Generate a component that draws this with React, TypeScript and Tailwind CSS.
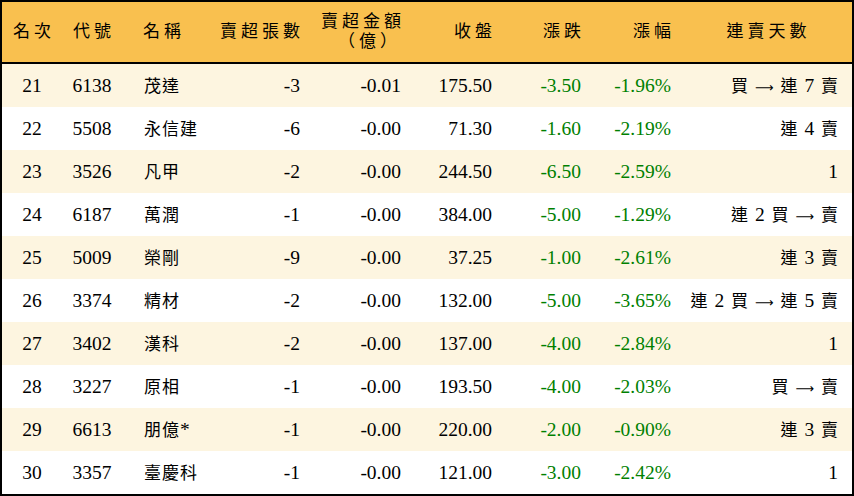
import React from "react";

type Row = {
  rank: string;
  code: string;
  name: string;
  lots: string;
  amount: string;
  close: string;
  change: string;
  pct: string;
  streak: string;
};

const rows: Row[] = [
  { rank: "21", code: "6138", name: "茂達", lots: "-3", amount: "-0.01", close: "175.50", change: "-3.50", pct: "-1.96%", streak: "買 → 連 7 賣" },
  { rank: "22", code: "5508", name: "永信建", lots: "-6", amount: "-0.00", close: "71.30", change: "-1.60", pct: "-2.19%", streak: "連 4 賣" },
  { rank: "23", code: "3526", name: "凡甲", lots: "-2", amount: "-0.00", close: "244.50", change: "-6.50", pct: "-2.59%", streak: "1" },
  { rank: "24", code: "6187", name: "萬潤", lots: "-1", amount: "-0.00", close: "384.00", change: "-5.00", pct: "-1.29%", streak: "連 2 買 → 賣" },
  { rank: "25", code: "5009", name: "榮剛", lots: "-9", amount: "-0.00", close: "37.25", change: "-1.00", pct: "-2.61%", streak: "連 3 賣" },
  { rank: "26", code: "3374", name: "精材", lots: "-2", amount: "-0.00", close: "132.00", change: "-5.00", pct: "-3.65%", streak: "連 2 買 → 連 5 賣" },
  { rank: "27", code: "3402", name: "漢科", lots: "-2", amount: "-0.00", close: "137.00", change: "-4.00", pct: "-2.84%", streak: "1" },
  { rank: "28", code: "3227", name: "原相", lots: "-1", amount: "-0.00", close: "193.50", change: "-4.00", pct: "-2.03%", streak: "買 → 賣" },
  { rank: "29", code: "6613", name: "朋億*", lots: "-1", amount: "-0.00", close: "220.00", change: "-2.00", pct: "-0.90%", streak: "連 3 賣" },
  { rank: "30", code: "3357", name: "臺慶科", lots: "-1", amount: "-0.00", close: "121.00", change: "-3.00", pct: "-2.42%", streak: "1" },
];

const font = { fontFamily: '"Liberation Serif", "Noto Sans CJK TC", serif' };

// CJK characters are drawn a little smaller than the latin digits
const Mixed: React.FC<{ text: string }> = ({ text }) => (
  <>
    {text.split(" ").map((part, i) => (
      <React.Fragment key={i}>
        {i > 0 && " "}
        {part === "→" ? (
          <span className="text-[13px]" style={{ fontFamily: '"DejaVu Sans", sans-serif' }}>
            ⟶
          </span>
        ) : /[\u4e00-\u9fff]/.test(part) ? (
          <span className="text-[17px]">{part}</span>
        ) : (
          <span>{part}</span>
        )}
      </React.Fragment>
    ))}
  </>
);

export default function App() {
  return (
    <div
      className="w-[854px] h-[496px] border-2 border-black bg-white text-black overflow-hidden"
      style={font}
    >
      {/* header */}
      <div className="flex h-[62px] items-center bg-[#f9c04f] border-b-2 border-black text-[17px] tracking-[4px] leading-[20px]">
        <div className="w-[60px] text-center pl-[4px]">名次</div>
        <div className="w-[60px] text-center pl-[4px]">代號</div>
        <div className="w-[78px] pl-[21px]">名稱</div>
        <div className="w-[110px] text-right pr-[6px]">賣超張數</div>
        <div className="w-[101px] text-right pr-[6px]">
          <div>賣超金額</div>
          <div className="pr-[4px]">（億）</div>
        </div>
        <div className="w-[91px] text-right pr-[6px]">收盤</div>
        <div className="w-[89px] text-right pr-[6px]">漲跌</div>
        <div className="w-[90px] text-right pr-[6px]">漲幅</div>
        <div className="flex-1 text-center pl-[4px]">連賣天數</div>
      </div>

      {/* rows */}
      {rows.map((r, i) => (
        <div
          key={r.rank}
          className={`flex h-[43px] items-center text-[19.5px] ${i % 2 === 0 ? "bg-[#fdf5e0]" : "bg-white"}`}
        >
          <div className="w-[60px] text-center">{r.rank}</div>
          <div className="w-[60px] text-center">{r.code}</div>
          <div className="w-[78px] pl-[22px] whitespace-nowrap">
            <span className="text-[17px] tracking-[1px]">{r.name.replace("*", "")}</span>
            {r.name.endsWith("*") && <span>*</span>}
          </div>
          <div className="w-[110px] text-right pr-[10px]">{r.lots}</div>
          <div className="w-[101px] text-right pr-[10px]">{r.amount}</div>
          <div className="w-[91px] text-right pr-[10px]">{r.close}</div>
          <div className="w-[89px] text-right pr-[10px] text-[#008000]">{r.change}</div>
          <div className="w-[90px] text-right pr-[10px] text-[#008000]">{r.pct}</div>
          <div className="flex-1 text-right pr-[14px] whitespace-nowrap [word-spacing:2px]">
            <Mixed text={r.streak} />
          </div>
        </div>
      ))}
    </div>
  );
}
